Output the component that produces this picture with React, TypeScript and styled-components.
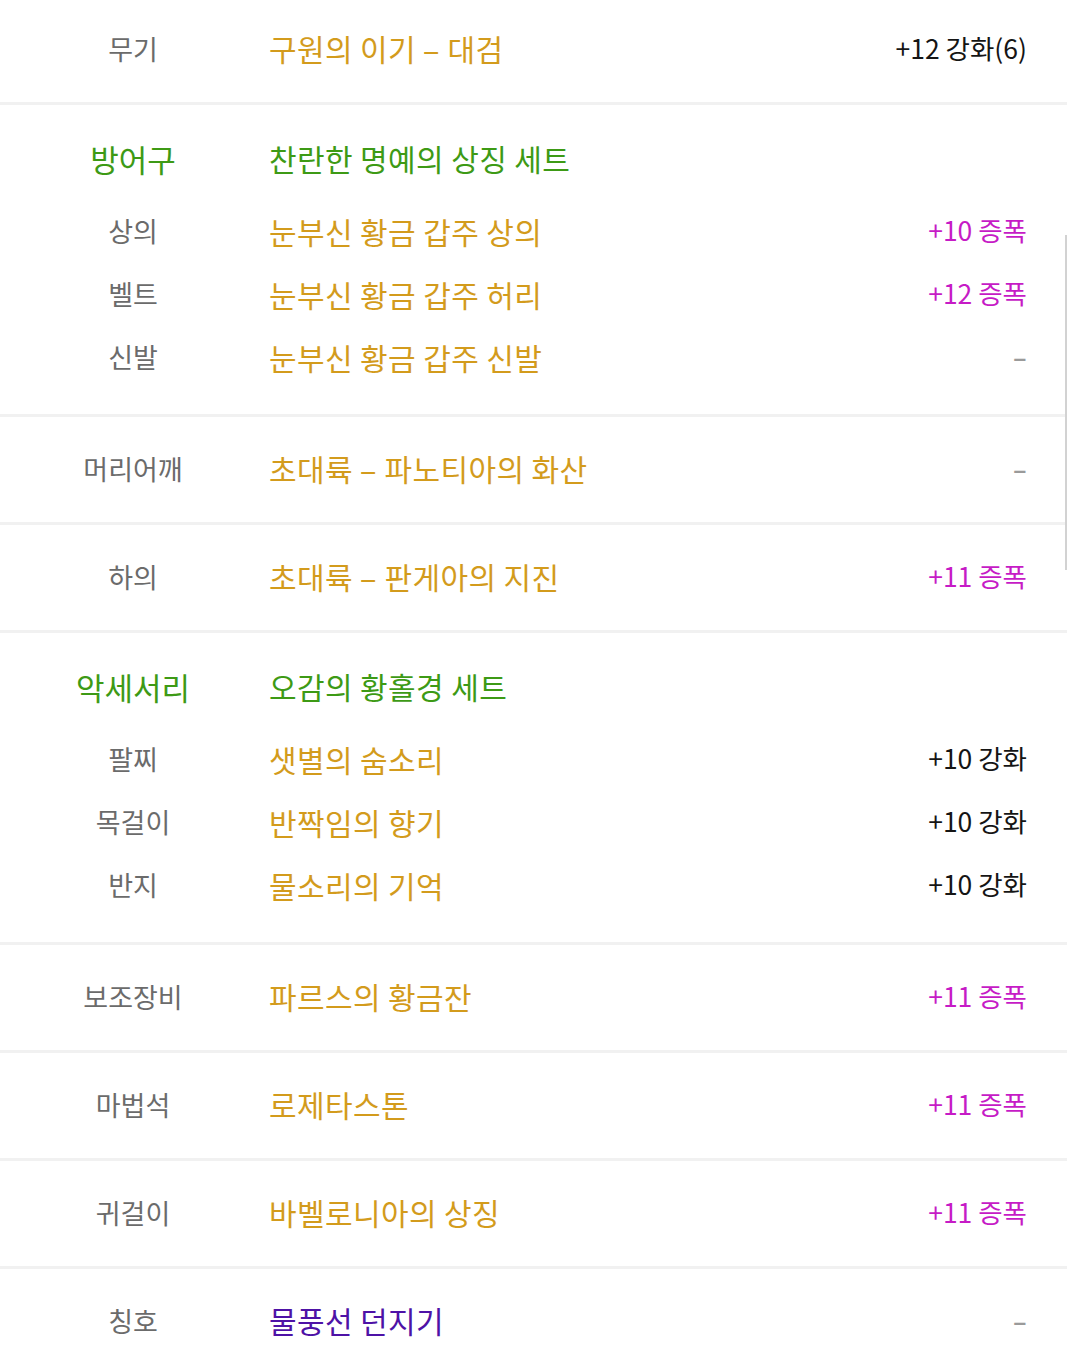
import React from "react";
import styled, { createGlobalStyle } from "styled-components";

const Global = createGlobalStyle`
  html, body { margin: 0; padding: 0; background: #ffffff; overflow: hidden; }
  body { font-family: "Noto Sans CJK KR", "Noto Sans", sans-serif; }
`;

const Page = styled.div`
  position: relative;
  width: 1067px;
  background: #fff;
`;

const Block = styled.section<{ $first?: boolean; $group?: boolean }>`
  border-top: ${(p) => (p.$first ? "none" : "3px solid #f1f1f1")};
  padding: ${(p) => (p.$group ? "12px 0 26px" : "0")};
`;

const Row = styled.div<{ $h: number; $lift?: number }>`
  display: grid;
  grid-template-columns: 266px 1fr auto;
  align-items: center;
  height: ${(p) => p.$h}px;
  box-sizing: border-box;
  padding-right: 40px;
  padding-bottom: ${(p) => p.$lift ?? 0}px;
  line-height: 1;
`;

const Label = styled.div<{ $head?: boolean }>`
  text-align: center;
  font-size: ${(p) => (p.$head ? 31 : 27)}px;
  color: ${(p) => (p.$head ? "#3d9a15" : "#6b6b6b")};
  font-weight: 400;
`;

type Tone = "gold" | "green" | "purple";
const toneColor: Record<Tone, string> = {
  gold: "#d39b1c",
  green: "#3d9a15",
  purple: "#4e12a6",
};

const Name = styled.div<{ $tone: Tone }>`
  padding-left: 3px;
  font-size: 30px;
  letter-spacing: 0.4px;
  font-weight: 400;
  color: ${(p) => toneColor[p.$tone]};
  white-space: nowrap;
`;

const Dash = styled.span<{ $w: number }>`
  display: inline-block;
  transform: scaleX(${(p) => p.$w});
  margin: 0 ${(p) => (p.$w - 1) * 4}px;
`;

const EmptyDash = styled.span`
  display: inline-block;
  font-weight: 500;
  transform: scaleX(1.6);
  transform-origin: right center;
`;

type ValTone = "plain" | "amp" | "none";
const Value = styled.div<{ $tone: ValTone }>`
  font-size: 26.5px;
  text-align: right;
  white-space: nowrap;
  color: ${(p) =>
    p.$tone === "amp" ? "#c61bc6" : p.$tone === "none" ? "#9a9a9a" : "#151515"};
`;

const ScrollThumb = styled.div`
  position: absolute;
  right: 0;
  top: 235px;
  width: 2px;
  height: 335px;
  background: #d2d2d2;
`;

type Item = { label: string; name: string; value: string; vt: ValTone; tone?: Tone };

const renderName = (name: string) => {
  const parts = name.split(" - ");
  if (parts.length === 1) return name;
  return (
    <>
      {parts[0]} <Dash $w={1.8}>-</Dash> {parts[1]}
    </>
  );
};

const renderValue = (v: string) => (v === "-" ? <EmptyDash>-</EmptyDash> : v);

const SingleRow = ({ item, first }: { item: Item; first?: boolean }) => (
  <Block $first={first}>
    <Row $h={first ? 102 : 105} $lift={first ? 6 : 3}>
      <Label>{item.label}</Label>
      <Name $tone={item.tone ?? "gold"}>{renderName(item.name)}</Name>
      <Value $tone={item.vt}>{renderValue(item.value)}</Value>
    </Row>
  </Block>
);

const GroupBlock = ({ head, set, items }: { head: string; set: string; items: Item[] }) => (
  <Block $group>
    <Row $h={82}>
      <Label $head>{head}</Label>
      <Name $tone="green">{set}</Name>
      <span />
    </Row>
    {items.map((it) => (
      <Row $h={63} key={it.label}>
        <Label>{it.label}</Label>
        <Name $tone="gold">{renderName(it.name)}</Name>
        <Value $tone={it.vt}>{renderValue(it.value)}</Value>
      </Row>
    ))}
  </Block>
);

export default function App() {
  return (
    <Page>
      <Global />
      <SingleRow first item={{ label: "무기", name: "구원의 이기 - 대검", value: "+12 강화(6)", vt: "plain" }} />
      <GroupBlock
        head="방어구"
        set="찬란한 명예의 상징 세트"
        items={[
          { label: "상의", name: "눈부신 황금 갑주 상의", value: "+10 증폭", vt: "amp" },
          { label: "벨트", name: "눈부신 황금 갑주 허리", value: "+12 증폭", vt: "amp" },
          { label: "신발", name: "눈부신 황금 갑주 신발", value: "-", vt: "none" },
        ]}
      />
      <SingleRow item={{ label: "머리어깨", name: "초대륙 - 파노티아의 화산", value: "-", vt: "none" }} />
      <SingleRow item={{ label: "하의", name: "초대륙 - 판게아의 지진", value: "+11 증폭", vt: "amp" }} />
      <GroupBlock
        head="악세서리"
        set="오감의 황홀경 세트"
        items={[
          { label: "팔찌", name: "샛별의 숨소리", value: "+10 강화", vt: "plain" },
          { label: "목걸이", name: "반짝임의 향기", value: "+10 강화", vt: "plain" },
          { label: "반지", name: "물소리의 기억", value: "+10 강화", vt: "plain" },
        ]}
      />
      <SingleRow item={{ label: "보조장비", name: "파르스의 황금잔", value: "+11 증폭", vt: "amp" }} />
      <SingleRow item={{ label: "마법석", name: "로제타스톤", value: "+11 증폭", vt: "amp" }} />
      <SingleRow item={{ label: "귀걸이", name: "바벨로니아의 상징", value: "+11 증폭", vt: "amp" }} />
      <SingleRow item={{ label: "칭호", name: "물풍선 던지기", value: "-", vt: "none", tone: "purple" }} />
      <ScrollThumb />
    </Page>
  );
}
